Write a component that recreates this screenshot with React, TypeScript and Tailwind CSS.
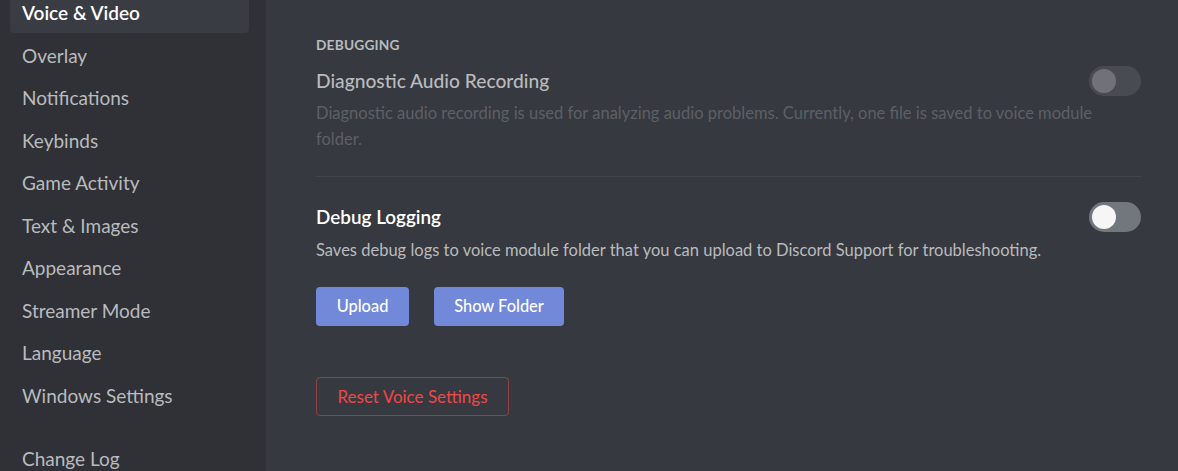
import React from "react";

const items = [
  "Voice & Video",
  "Overlay",
  "Notifications",
  "Keybinds",
  "Game Activity",
  "Text & Images",
  "Appearance",
  "Streamer Mode",
  "Language",
  "Windows Settings",
];

function Toggle({ disabled }: { disabled?: boolean }) {
  return (
    <div
      className={
        "flex h-[30px] w-[52px] shrink-0 items-center rounded-full p-[3px] " +
        (disabled ? "bg-[#72767d] opacity-30" : "bg-[#72767d]")
      }
    >
      <div className="h-[24px] w-[24px] rounded-full bg-[#f6f6f7]" />
    </div>
  );
}

export default function App() {
  return (
    <div
      className="flex h-[471px] w-[1178px] overflow-hidden bg-[#36393f]"
      style={{ fontFamily: "Lato, 'Open Sans', sans-serif" }}
    >
      <aside className="flex w-[266px] shrink-0 flex-col bg-[#2f3136] pl-[10px] pr-[17px]">
        <div className="-mt-[5.25px] flex flex-col gap-[4px]">
          {items.map((it, i) => (
            <div
              key={it}
              className={
                "flex h-[38.5px] items-center rounded-[4px] pb-[1px] pl-[12px] text-[19px] " +
                (i === 0
                  ? "bg-[#393c43] font-semibold text-white"
                  : "text-[#b9bbbe]")
              }
            >
              {it}
            </div>
          ))}
        </div>
        <div className="mx-[12px] mt-[12px] h-px bg-[#404349]" />
        <div className="mt-[17px] flex h-[38.5px] items-center pb-[1px] pl-[12px] text-[19px] text-[#b9bbbe]">
          Change Log
        </div>
      </aside>

      <main className="flex flex-1 flex-col pl-[50px] pr-[37px] pt-[36px]">
        <div className="text-[13.7px] font-bold uppercase leading-[18px] tracking-[0.2px] text-[#b9bbbe]">
          Debugging
        </div>
        <div className="mt-[12px] flex h-[30px] items-center justify-between">
          <div className="text-[19.2px] font-medium text-[#b9bbbe]">
            Diagnostic Audio Recording
          </div>
          <Toggle disabled />
        </div>
        <div className="mt-[4px] text-[16.5px] leading-[26px] text-[#5d6066]">
          Diagnostic audio recording is used for analyzing audio problems. Currently, one file is saved to voice module folder.
        </div>
        <div className="mt-[24px] h-px bg-[#42454a]" />
        <div className="mt-[25px] flex h-[30px] items-center justify-between">
          <div className="text-[18.9px] font-semibold text-white">Debug Logging</div>
          <Toggle />
        </div>
        <div className="mt-[5px] text-[16.5px] leading-[26px] text-[#b9bbbe]">
          Saves debug logs to voice module folder that you can upload to Discord Support for troubleshooting.
        </div>
        <div className="mt-[24px] flex gap-[25px]">
          <button className="flex h-[39px] w-[93px] items-center justify-center rounded-[4px] bg-[#7289da] text-[16.4px] font-medium text-white">
            Upload
          </button>
          <button className="flex h-[39px] w-[130px] items-center justify-center rounded-[4px] bg-[#7289da] text-[16.4px] font-medium text-white">
            Show Folder
          </button>
        </div>
        <div className="mt-[51px] flex">
          <button className="flex h-[39px] w-[193px] items-center justify-center rounded-[4px] border border-[#f04747]/50 text-[17px] text-[#f04747]">
            Reset Voice Settings
          </button>
        </div>
      </main>
    </div>
  );
}
